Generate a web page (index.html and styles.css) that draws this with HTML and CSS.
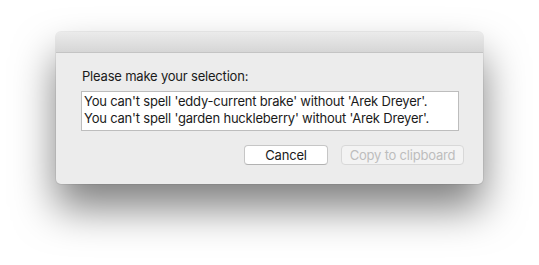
FILE: index.html
```html
<!DOCTYPE html>
<html>
<head>
  <title>Selection</title>
  <link rel="stylesheet" href="styles.css">
</head>
<body>
  <div class="window">
    <div class="titlebar"></div>
    <div class="content">
      <div class="prompt">Please make your selection:</div>
      <div class="list">
        <div class="item">You can't spell 'eddy-current brake' without 'Arek Dreyer'.</div>
        <div class="item">You can't spell 'garden huckleberry' without 'Arek Dreyer'.</div>
      </div>
      <div class="buttons">
        <button class="btn">Cancel</button>
        <button class="btn disabled">Copy to clipboard</button>
      </div>
    </div>
  </div>
</body>
</html>
```

FILE: styles.css
```css
html {
  background-color: #fff;
}

body {
  margin: 0;
  min-height: 265px;
  box-sizing: border-box;
  padding: 32px 0 0 56px;
  font-family: Inter, "Liberation Sans", Arial, sans-serif;
  font-size: 13px;
  letter-spacing: -0.2px;
  color: #1a1a1a;
}

.window {
  width: 427px;
  height: 152px;
  background-color: #ececec;
  border-radius: 5px;
  box-shadow: 0 24px 42px rgba(0, 0, 0, 0.5), 0 0 0 1px rgba(0, 0, 0, 0.06);
  overflow: hidden;
}

.titlebar {
  height: 20px;
  background: linear-gradient(#ebebeb, #d6d6d6);
  border-bottom: 1px solid #c4c4c4;
}

.content {
  padding: 15px 19px 0 25px;
}

.prompt {
  margin-left: 1px;
  height: 16px;
  line-height: 16px;
}

.list {
  margin-top: 7px;
  width: 374px;
  height: 37px;
  background-color: #fff;
  border: 1px solid #bdbdbd;
  padding: 1px 0 0 2px;
}

.item {
  line-height: 17px;
  height: 17px;
}

.buttons {
  display: flex;
  justify-content: flex-end;
  gap: 13px;
  margin-top: 14px;
}

.btn {
  font-family: Inter, "Liberation Sans", Arial, sans-serif;
  font-size: 13px;
  letter-spacing: -0.2px;
  height: 20px;
  padding: 0;
  background-color: #fff;
  border: 1px solid #c6c6c6;
  border-bottom-color: #b2b2b2;
  border-radius: 4px;
  color: #1a1a1a;
  width: 84px;
}

.btn.disabled {
  width: 123px;
  background-color: #f3f3f3;
  border-color: #d8d8d8;
  color: #bdbdbd;
}
```
